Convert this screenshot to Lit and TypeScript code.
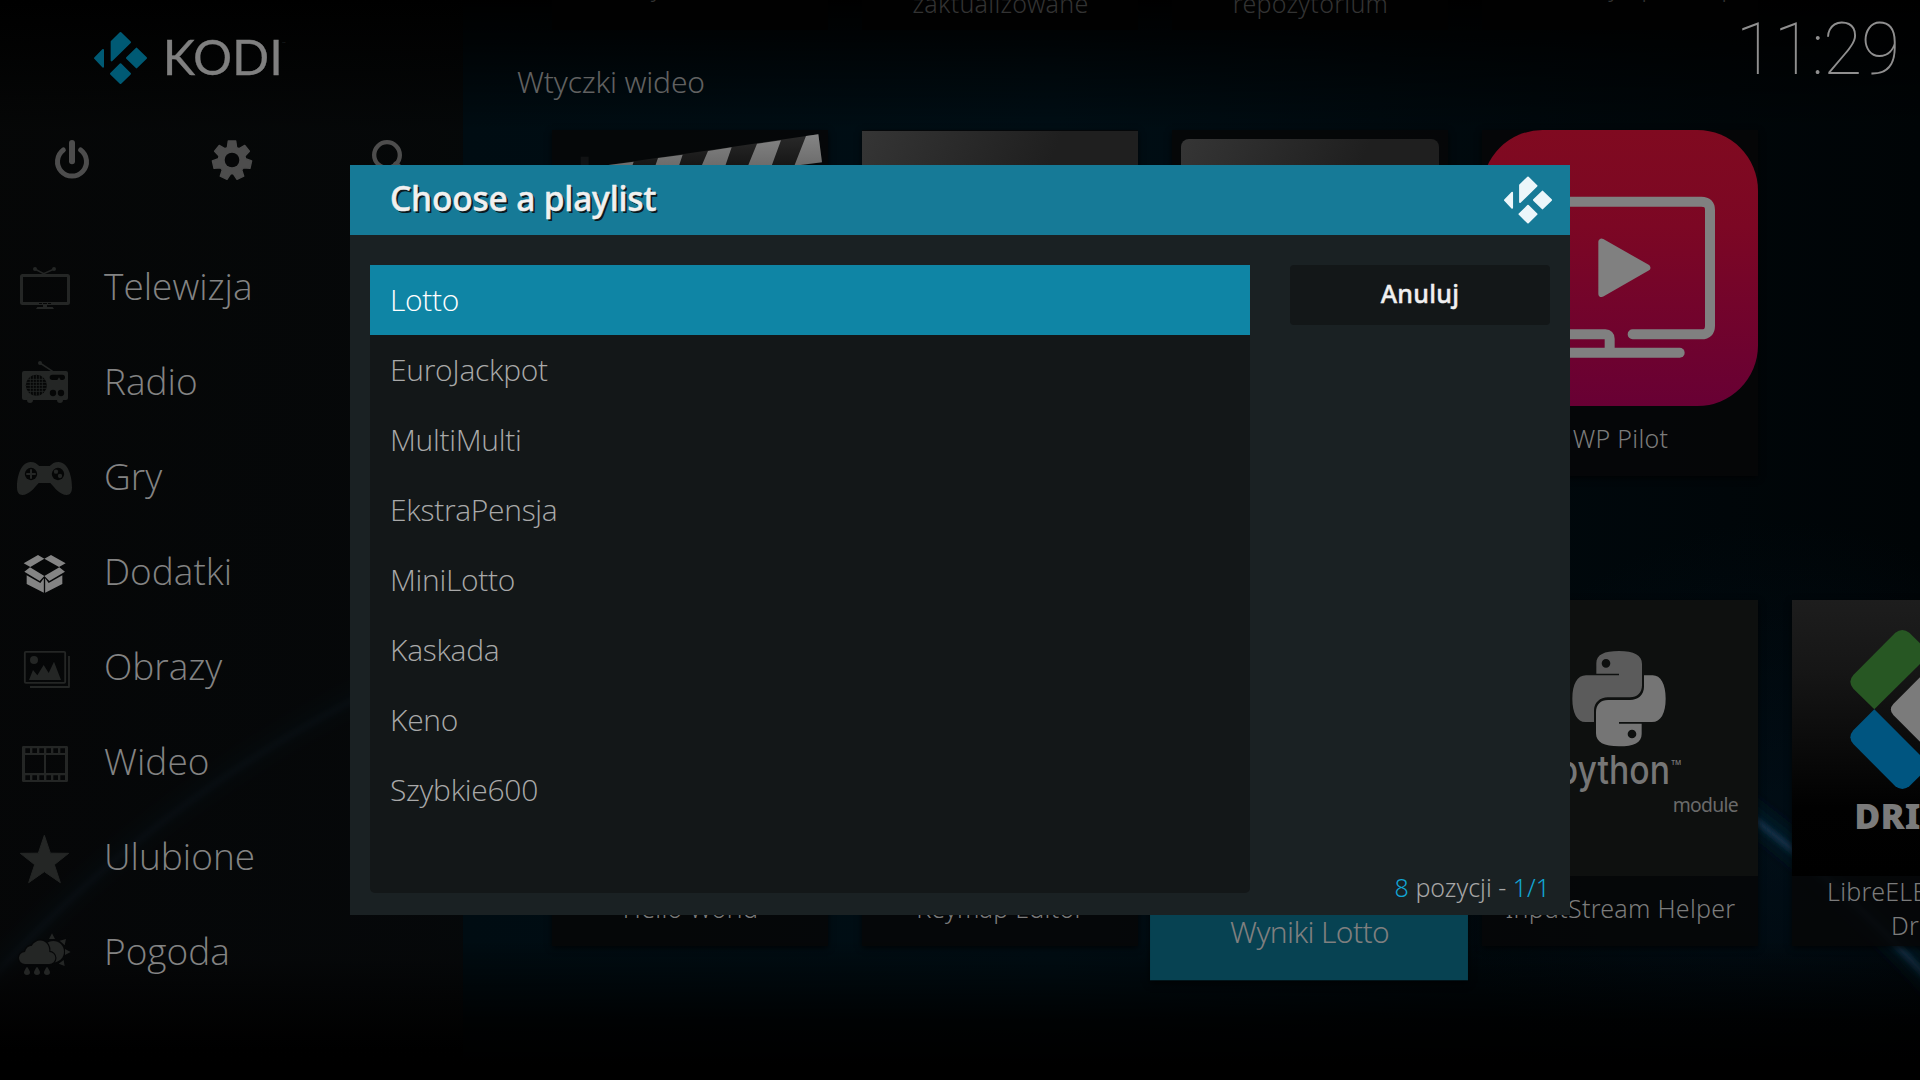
import { LitElement, html, css, svg } from "lit";
import { customElement } from "lit/decorators.js";
import { classMap } from "lit/directives/class-map.js";

const MENU = [
  { label: "Telewizja", box: "45 0 180 285", art: svg`
    <rect x="64.500" y="106.500" width="141" height="84" rx="3" fill="none" stroke="currentColor" stroke-width="9"/>
    <path d="M106 88L131 101L161 88" fill="none" stroke="currentColor" stroke-width="5"/>
    <circle cx="105" cy="87" r="6"/><circle cx="162" cy="87" r="6"/>
    <path d="M117 190.500H153" stroke="#050606" stroke-width="3" stroke-dasharray="9 3 12 3"/>
    <path d="M129 195h12v6h17l4 6H108l4-6h17z"/>` },
  { label: "Radio", box: "45 285 180 285", art: svg`
    <circle cx="120" cy="369" r="6"/><path d="M120 369L158 394" stroke="currentColor" stroke-width="4.500"/>
    <rect x="66" y="393" width="138" height="87" rx="6"/><circle cx="90" cy="480" r="9"/><circle cx="180" cy="480" r="9"/>
    <circle cx="109" cy="436" r="31.500" fill="#050606"/>
    <path d="M91 410V462M100 406V466M109 405V467M118 406V466M127 410V462M84 418H134M79 427H139M78 436H140M79 445H139M84 454H134" stroke="currentColor" stroke-width="2.500"/>
    <path d="M157 404h30a8 8 0 0 1 0 16h-5l-5-8l-5 8h-15a8 8 0 0 1 0-16z" fill="#050606"/>
    <circle cx="159" cy="459" r="9.500" fill="#050606"/><circle cx="183" cy="459" r="9.500" fill="#050606"/>` },
  { label: "Gry", box: "45 570 180 285", art: svg`
    <path d="M51 742C51 710 62 666 92 666C104 666 110 671 118 678H149C157 671 163 666 175 666C205 666 216 710 216 742C216 758 210 765 200 765C180 765 165 745 151 729H116C102 745 87 765 67 765C57 765 51 758 51 742Z"/>
    <circle cx="93" cy="702" r="18.500" fill="#050606"/><path d="M93 690V714M81 702H105" stroke="currentColor" stroke-width="6" stroke-linecap="round"/>
    <circle cx="174" cy="702" r="18.500" fill="#050606"/><circle cx="168" cy="695" r="6.500"/><circle cx="180" cy="708" r="6.500"/>` },
  { label: "Dodatki", active: true, box: "45 855 180 285", art: svg`
    <path d="M71 970L114 945L133 956L91 981ZM133 956L153 945L197 970L177 981ZM90 982L133 1008L119 1023L73 995ZM178 982L133 1008L148 1023L195 995Z"/>
    <path d="M80 1006L121 1029L131.500 1015V1058L80 1032ZM187 1006L146 1029L135.500 1015V1058L187 1032Z"/>` },
  { label: "Obrazy", box: "45 0 180 285", art: svg`
    <rect x="74.500" y="95.500" width="121" height="93" rx="3" fill="none" stroke="currentColor" stroke-width="5.500"/>
    <path d="M207 108V201H90" fill="none" stroke="currentColor" stroke-width="5.500" stroke-linejoin="round"/>
    <circle cx="102" cy="120" r="12"/><path d="M87 180L99 150L112 166L131 135L146 159L162 125L183 180Z"/>` },
  { label: "Wideo", box: "45 285 180 285", art: svg`
    <path fill-rule="evenodd" d="M70 378H200a4 4 0 0 1 4 4V482a4 4 0 0 1-4 4H70a4 4 0 0 1-4-4V382a4 4 0 0 1 4-4ZM76 385v14h14v-14zM97 385v14h14v-14zM118 385v14h14v-14zM139 385v14h14v-14zM160 385v14h14v-14zM181 385v14h14v-14zM76 466v14h14v-14zM97 466v14h14v-14zM118 466v14h14v-14zM139 466v14h14v-14zM160 466v14h14v-14zM181 466v14h14v-14zM75 405v54h57v-54zM138 405v54h57v-54z"/>` },
  { label: "Ulubione", box: "45 570 180 285", art: svg`
    <path d="M133 646L151 699.500L206 700L163 734L181 788L133 755L86 788L104 734L61 700L115 699.500Z" stroke="currentColor" stroke-width="3" stroke-linejoin="round"/>` },
  { label: "Pogoda", box: "45 855 180 285", art: svg`
    <circle cx="160" cy="995" r="32"/>
    <path d="M147 957L156 940L165 957ZM179 962L198 957L194 976ZM195 987L212 996L195 1005ZM176 1031L194 1038L191 1020Z"/>
    <path d="M75 1032a18 18 0 0 1 0-36C78 982 88 976 95 978C110 950 150 958 148 996a18 18 0 0 1 0 36Z" stroke="#060708" stroke-width="7" paint-order="stroke"/>
    <path d="M81 1040q9 12 9 17a9 8 0 0 1-18 0q0-5 9-17zM111 1040q9 12 9 17a9 8 0 0 1-18 0q0-5 9-17zM141 1040q9 12 9 17a9 8 0 0 1-18 0q0-5 9-17z"/>` },
];

const PLAYLISTS = ["Lotto", "EuroJackpot", "MultiMulti", "EkstraPensja", "MiniLotto", "Kaskada", "Keno", "Szybkie600"];

const mark = svg`<g fill="currentColor" stroke="currentColor" stroke-width="6" stroke-linejoin="round">
  <path d="M335 125L361.500 99L390 127L335 181Z"/><path d="M309 150V200L285 174.500Z"/>
  <path d="M409.500 146L438 174L409.500 202L381 174Z"/><path d="M361.500 193L390 221L361.500 249L333 221Z"/></g>`;

const gear = () => {
  const p: string[] = [];
  for (let i = 0; i < 7; i++) {
    for (const [r, d] of [[41, -20], [59, -11], [59, 11], [41, 20]]) {
      const a = ((i * 360) / 7 + d) * Math.PI / 180;
      p.push(`${(696 + r * Math.sin(a)).toFixed(1)} ${(481 - r * Math.cos(a)).toFixed(1)}`);
    }
  }
  return `M${p.join("L")}Z`;
};

const clapper = html`<svg class="art" viewBox="21 30 828 828">
  <defs><linearGradient id="w" x1="0" y1="0" x2="0" y2="1"><stop offset="0" stop-color="#858585"/><stop offset="1" stop-color="#6c6c6c"/></linearGradient>
  <linearGradient id="k" x1="0" y1="0" x2="0" y2="1"><stop offset="0" stop-color="#2a2a2a"/><stop offset="1" stop-color="#050505"/></linearGradient></defs>
  <path d="M190 135L820 43L831 127L230 215Z" fill="url(#k)"/><rect x="107" y="110" width="24" height="40" fill="#111213"/>
  <path d="M190 135L266 125L262 137H190ZM339 114L413 104L402 137H331ZM489 93L560 82L541 137H470ZM636 71L708 61L680 137H609ZM783 48L820 43L831 127L748 137Z" fill="url(#w)"/></svg>`;

const pilot = html`<svg class="art" viewBox="6 30 828 828">
  <defs><linearGradient id="r" x1="0" y1="0" x2="0" y2="1"><stop offset="0" stop-color="#800a20"/><stop offset=".35" stop-color="#7c0724"/><stop offset="1" stop-color="#680034"/></linearGradient></defs>
  <rect x="6" y="30" width="828" height="828" rx="182" fill="url(#r)"/>
  <g fill="none" stroke="#808080" stroke-width="30" stroke-linecap="round" stroke-linejoin="round">
  <path d="M458 643H664Q690 643 690 617V271Q690 245 664 245H176Q150 245 150 271V617Q150 643 176 643H376Q389 643 389 656V690"/>
  <path d="M242 698H599"/></g><path d="M365 366V521L501 443Z" fill="#808080" stroke="#808080" stroke-width="20" stroke-linejoin="round"/></svg>`;

const SNAKE = "M349 281V250C349 224 372 213 417 213C462 213 486 225 486 252V316C486 338 472 352 450 352H384C360 352 342 368 342 392V426H316C292 426 277 400 277 356C277 312 292 286 318 286H417V281ZM391 250a13 13 0 1 0-26 0a13 13 0 1 0 26 0Z";
const python = html`<svg class="art" viewBox="6 60 828 828"><rect x="6" y="60" width="828" height="828" fill="#0e100f"/>
  <path d=${SNAKE} fill="#5b5b5b" fill-rule="evenodd"/><path d=${SNAKE} fill="#757575" fill-rule="evenodd" transform="rotate(180 417 356)"/>
  <text class="py" x="232" y="612" textLength="338" lengthAdjust="spacingAndGlyphs">python</text>
  <text class="tm" x="574" y="556" textLength="30" lengthAdjust="spacingAndGlyphs">TM</text>
  <text class="mod" x="578" y="695" textLength="198">module</text></svg>`;

const driver = html`<svg class="art" viewBox="936 60 828 828">
  <defs><linearGradient id="d" x1="0" y1="0" x2="0" y2="1"><stop offset="0" stop-color="#1d1d1d"/><stop offset=".25" stop-color="#161616"/><stop offset=".75" stop-color="#010101"/><stop offset="1" stop-color="#000"/></linearGradient></defs>
  <rect x="936" y="60" width="828" height="828" fill="url(#d)"/>
  <path d="M1183 388L1120 326Q1102 305 1120 285L1246 158Q1267 142 1288 158L1351 221Z" fill="#275723"/>
  <path d="M1183 388L1120 451Q1102 472 1120 492L1246 619Q1267 635 1288 619L1351 556Z" fill="#005580"/>
  <path d="M1240 372L1340 272L1440 388L1340 505L1240 405Q1225 388 1240 372Z" fill="#7b7b7b"/>
  <text class="drv" x="1123" y="746">DRIVERS</text></svg>`;

@customElement("app-root")
export class AppRoot extends LitElement {
  static styles = css`
    :host { display: block; width: 1920px; height: 1080px; }
    .stage { position: relative; width: 1920px; height: 1080px; overflow: hidden; background: #000;
      font-family: "Noto Sans", "Open Sans", sans-serif; font-weight: 300; }
    .sky, .fade { position: absolute; inset: 0; width: 1920px; height: 1080px; }
    .fade { background: linear-gradient(#000 0, rgba(0,0,0,.75) 40px, transparent 130px, transparent 940px, rgba(0,0,0,.85) 1020px, #000 1065px); }
    .shell { position: relative; z-index: 0; display: flex; height: 1080px; }
    .side { width: 463px; flex: none; background: linear-gradient(rgba(0,0,0,.95) 0, rgba(6,7,7,.85) 130px, rgba(6,7,8,.85) 960px, rgba(0,0,0,.95) 1050px); }
    .brand { display: flex; align-items: center; height: 116px; padding-left: 94px; color: #005a74; box-sizing: border-box; }
    .brand svg { display: block; overflow: visible; }
    .word { font-family: Lato, sans-serif; font-weight: 400; font-size: 144px; fill: #808080; stroke: #808080; stroke-width: .8px; }
    .wtm { font-size: 7px; fill: #777; }
    .tools { display: flex; height: 60px; padding: 14px 0 50px 50px; color: #4d4d4d; }
    .tools svg { width: 44px; height: 60px; margin-right: 116px; overflow: visible; }
    .tools svg + svg { margin-right: 114px; }
    .row { display: flex; height: 95px; align-items: center; padding-left: 15px; }
    .row svg { width: 60px; height: 95px; fill: currentColor; color: #242625; margin-right: 29px; }
    .row.active svg { color: #848484; }
    .row span { font-family: "Open Sans", "Noto Sans", sans-serif; font-size: 37px; font-kerning: none; line-height: 50px; padding-bottom: 4px; color: #838383; }
    .main { flex: 1; min-width: 0; overflow: hidden; }
    .cards { display: flex; gap: 34px; padding-left: 89px; }
    .card { width: 276px; flex: none; background: rgba(6,7,8,.9); box-shadow: 0 2px 6px rgba(0,0,0,.75); }
    .pic { height: 276px; display: flex; overflow: hidden; }
    .art { width: 276px; height: 276px; display: block; }
    .cap { height: 70px; display: flex; flex-direction: column; justify-content: center; text-align: center; padding: 0 0 7px 1px; box-sizing: border-box;
      font-size: 25px; line-height: 34px; letter-spacing: .28px; color: #7b7b7b; white-space: nowrap; }
    .top { height: 30px; align-items: flex-end; }
    .top .card { background: #010101; box-shadow: none; }
    .top .cap { padding-bottom: 7px; height: 82px; color: #333; }
    .title { height: 100px; padding: 31px 0 0 54px; box-sizing: border-box; font-size: 30px; line-height: 41px; letter-spacing: -.2px; color: #616161; }
    .first { margin-bottom: 124px; }
    .first .grey { margin-top: 1px; }
    .grey { flex: 1; background: linear-gradient(115deg, #353535, #1f1f1f 50%); }
    .first .inset { margin: 9px 9px 0; border-radius: 8px; }
    .focus { transform: translate(-1px, 8px) scale(1.152); background: #074252; z-index: 1; }
    .focus .cap { padding-bottom: 14px; color: #7f7f7f; letter-spacing: -.55px; font-size: 26px; }
    .indent { text-align: left; padding-left: 34px; }
    .indent2 { text-align: left; padding-left: 98px; }
    .py { font-family: Inter, sans-serif; font-weight: 500; font-size: 117px; fill: #767676; }
    .tm { font-size: 20px; font-weight: 600; fill: #767676; }
    .mod { font-size: 58px; font-weight: 400; fill: #6a6a6a; }
    .drv { font-size: 107px; font-weight: 900; fill: #7b7b7b; }
    .clock { position: absolute; right: 21px; top: 8px; font: 100 71.500px/84px Roboto, sans-serif; letter-spacing: -1.200px; color: #8f8f8f; }
    .dialog { position: absolute; z-index: 5; left: 350px; top: 165px; width: 1220px; height: 750px; background: #1a2123; display: flex; flex-direction: column; }
    .head { height: 70px; flex: none; background: #167a97; display: flex; align-items: center; justify-content: space-between; padding: 0 18px 0 40px; color: #ecf6fa; }
    .head h1 { margin: 0; padding-bottom: 4px; font-size: 33.500px; font-weight: 500; line-height: 46px; letter-spacing: -.18px; color: #f0f0f0; -webkit-text-stroke: .5px #f0f0f0; text-shadow: 2px 2px 0 #0a1a20; }
    .body { flex: 1; display: flex; padding: 30px 20px 22px; gap: 40px; }
    .list { width: 880px; background: #131718; border-radius: 0 0 5px 5px; }
    .item { height: 70px; display: flex; align-items: center; padding: 0 0 1px 20px; box-sizing: border-box; font-family: "Open Sans", "Noto Sans", sans-serif; font-size: 30px; font-kerning: none; letter-spacing: -.3px; color: #a9a9a9; }
    .item.on { background: #0f85a5; color: #fff; }
    .rail { flex: 1; display: flex; flex-direction: column; justify-content: space-between; }
    .btn { height: 60px; border-radius: 4px; background: #131718; display: flex; align-items: center; justify-content: center; font-size: 25px; font-weight: 500; letter-spacing: .3px;
      color: #f0f0f0; -webkit-text-stroke: .4px #f0f0f0; padding-bottom: 4px; box-sizing: border-box; }
    .pages { text-align: right; font-size: 25px; line-height: 34px; color: #a6a6a6; margin-bottom: -11px; }
    .pages b { font-weight: 300; color: #12a5d4; }
  `;

  render() {
    return html`<div class="stage">
      <svg class="sky" viewBox="0 0 1920 1080">
        <defs>
          <linearGradient id="sky" x1="0" y1="0" x2="1" y2="0"><stop offset="0" stop-color="#030506"/><stop offset=".24" stop-color="#000c12"/><stop offset=".55" stop-color="#000e15"/><stop offset=".8" stop-color="#00080c"/><stop offset="1" stop-color="#000406"/></linearGradient>
          <radialGradient id="low" cx="1780" cy="850" r="330" gradientUnits="userSpaceOnUse"><stop offset="0" stop-color="#031a2c"/><stop offset="1" stop-color="#031a2c" stop-opacity="0"/></radialGradient>
          <filter id="b1" x="-10%" y="-10%" width="120%" height="120%"><feGaussianBlur stdDeviation="9"/></filter>
          <filter id="b2" x="-10%" y="-10%" width="120%" height="120%"><feGaussianBlur stdDeviation="2.500"/></filter>
        </defs>
        <rect width="1920" height="1080" fill="url(#sky)"/><rect width="1920" height="1080" fill="url(#low)" opacity=".4"/>
        <circle cx="960" cy="1861" r="1312" fill="none" stroke="#06202f" stroke-width="16" filter="url(#b1)"/>
        <circle cx="960" cy="1861" r="1310" fill="none" stroke="#12304a" stroke-width="6" filter="url(#b2)"/>
      </svg>
      <div class="fade"></div>
      <div class="shell">
        <nav class="side">
          <div class="brand">
            <svg width="200" height="54" viewBox="282 93 600 162">${mark}
              <text class="word" x="488" y="226" textLength="361" lengthAdjust="spacingAndGlyphs">KODI</text><text class="wtm" x="846" y="129">TM</text></svg>
          </div>
          <div class="tools">
            <svg viewBox="150 390 132 180" fill="none" stroke="currentColor" stroke-linecap="round"><path d="M190 450A43.500 43.500 0 1 0 242 450" stroke-width="15"/><path d="M216 429V484" stroke-width="18"/></svg>
            <svg viewBox="630 390 132 180"><path d=${gear()} fill="currentColor" stroke="currentColor" stroke-width="4" stroke-linejoin="round"/><circle cx="696" cy="480" r="22" fill="#060708"/></svg>
            <svg viewBox="1104 390 132 180" fill="none" stroke="currentColor" stroke-width="13"><circle cx="1161" cy="465" r="38.500"/><path d="M1188 492L1218 522" stroke-width="16" stroke-linecap="round"/></svg>
          </div>
          ${MENU.map(m => html`<div class=${classMap({ row: true, active: !!m.active })}><svg viewBox=${m.box}>${m.art}</svg><span>${m.label}</span></div>`)}
        </nav>
        <main class="main">
          <div class="cards top">
            <div class="card"><div class="cap">Moje dodatki</div></div>
            <div class="card"><div class="cap"><span>Ostatnio</span><span>zaktualizowane</span></div></div>
            <div class="card"><div class="cap"><span>Zainstaluj z</span><span>repozytorium</span></div></div>
            <div class="card"><div class="cap">Zainstaluj z pliku zip</div></div>
          </div>
          <div class="title">Wtyczki wideo</div>
          <div class="cards first">
            <div class="card"><div class="pic">${clapper}</div><div class="cap"></div></div>
            <div class="card"><div class="pic"><div class="grey"></div></div><div class="cap"></div></div>
            <div class="card"><div class="pic"><div class="grey inset"></div></div><div class="cap"></div></div>
            <div class="card"><div class="pic">${pilot}</div><div class="cap">WP Pilot</div></div>
          </div>
          <div class="cards">
            <div class="card"><div class="pic"></div><div class="cap">Hello World</div></div>
            <div class="card"><div class="pic"></div><div class="cap">Keymap Editor</div></div>
            <div class="card focus"><div class="pic"></div><div class="cap">Wyniki Lotto</div></div>
            <div class="card"><div class="pic">${python}</div><div class="cap">InputStream Helper</div></div>
            <div class="card"><div class="pic">${driver}</div><div class="cap"><span class="indent">LibreELEC</span><span class="indent2">Drivers</span></div></div>
          </div>
        </main>
      </div>
      <div class="clock">11:29</div>
      <section class="dialog">
        <header class="head"><h1>Choose a playlist</h1><svg width="48" height="48" viewBox="282 94.500 159 159">${mark}</svg></header>
        <div class="body">
          <div class="list">${PLAYLISTS.map((p, i) => html`<div class=${classMap({ item: true, on: i === 0 })}>${p}</div>`)}</div>
          <div class="rail"><div class="btn">Anuluj</div><div class="pages"><b>8</b> pozycji - <b>1/1</b></div></div>
        </div>
      </section>
    </div>`;
  }
}
